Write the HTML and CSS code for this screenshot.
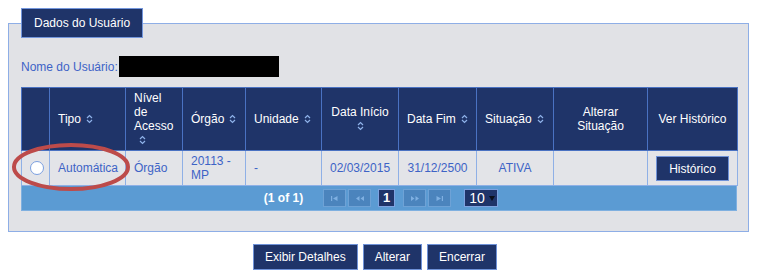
FILE: index.html
```html
<!DOCTYPE html>
<html lang="pt-BR">
<head>
<meta charset="utf-8">
<title>Dados do Usuário</title>
<link rel="stylesheet" href="styles.css">
</head>
<body>
<fieldset class="panel">
  <legend class="panel-title">Dados do Usuário</legend>
  <div class="user-row"><span class="user-label">Nome do Usuário:</span><span class="redacted"></span></div>
  <div class="datatable">
    <table class="grid">
      <colgroup>
        <col class="c-sel"><col class="c-tipo"><col class="c-nivel"><col class="c-orgao"><col class="c-unid"><col class="c-ini"><col class="c-fim"><col class="c-sit"><col class="c-alt"><col class="c-hist">
      </colgroup>
      <thead>
        <tr>
          <th></th>
          <th>Tipo<svg class="sort-icon" viewBox="0 0 7 10" width="7" height="10"><path d="M1 4L3.5 1.5L6 4M1 6L3.5 8.5L6 6"/></svg></th>
          <th>Nível de Acesso<svg class="sort-icon" viewBox="0 0 7 10" width="7" height="10"><path d="M1 4L3.5 1.5L6 4M1 6L3.5 8.5L6 6"/></svg></th>
          <th>Órgão<svg class="sort-icon" viewBox="0 0 7 10" width="7" height="10"><path d="M1 4L3.5 1.5L6 4M1 6L3.5 8.5L6 6"/></svg></th>
          <th>Unidade<svg class="sort-icon" viewBox="0 0 7 10" width="7" height="10"><path d="M1 4L3.5 1.5L6 4M1 6L3.5 8.5L6 6"/></svg></th>
          <th class="center">Data Início<br><svg class="sort-icon solo" viewBox="0 0 7 10" width="7" height="10"><path d="M1 4L3.5 1.5L6 4M1 6L3.5 8.5L6 6"/></svg></th>
          <th>Data Fim<svg class="sort-icon" viewBox="0 0 7 10" width="7" height="10"><path d="M1 4L3.5 1.5L6 4M1 6L3.5 8.5L6 6"/></svg></th>
          <th>Situação<svg class="sort-icon" viewBox="0 0 7 10" width="7" height="10"><path d="M1 4L3.5 1.5L6 4M1 6L3.5 8.5L6 6"/></svg></th>
          <th class="center">Alterar Situação</th>
          <th class="center">Ver Histórico</th>
        </tr>
      </thead>
      <tbody>
        <tr>
          <td class="center"><span class="radio"></span></td>
          <td>Automática</td>
          <td>Órgão</td>
          <td>20113 - MP</td>
          <td>-</td>
          <td class="center">02/03/2015</td>
          <td class="center">31/12/2500</td>
          <td class="center">ATIVA</td>
          <td></td>
          <td class="center"><button class="btn btn-small" type="button">Histórico</button></td>
        </tr>
      </tbody>
    </table>
    <div class="paginator">
      <span class="pg-count">(1 of 1)</span>
      <span class="pg-btn pg-first"><svg viewBox="0 0 7 5" width="7" height="5"><rect x="0" y="0" width="1.2" height="5"/><path d="M6.5 0L2 2.5L6.5 5Z"/></svg></span>
      <span class="pg-btn pg-prev"><svg viewBox="0 0 8 5" width="8" height="5"><path d="M3.5 0L0 2.5L3.5 5ZM8 0L4.5 2.5L8 5Z"/></svg></span>
      <span class="pg-current">1</span>
      <span class="pg-btn pg-next"><svg viewBox="0 0 8 5" width="8" height="5"><path d="M0 0L3.5 2.5L0 5ZM4.5 0L8 2.5L4.5 5Z"/></svg></span>
      <span class="pg-btn pg-last"><svg viewBox="0 0 7 5" width="7" height="5"><path d="M0.5 0L5 2.5L0.5 5Z"/><rect x="5.8" y="0" width="1.2" height="5"/></svg></span>
      <span class="pg-select">10<svg class="pg-caret" viewBox="0 0 6 5" width="6" height="5"><path d="M0 0L6 0L3 5Z"/></svg></span>
    </div>
  </div>
</fieldset>
<div class="actions">
  <button class="btn" type="button">Exibir Detalhes</button>
  <button class="btn" type="button">Alterar</button>
  <button class="btn" type="button">Encerrar</button>
</div>
<svg class="highlight" viewBox="0 0 120 50" width="120" height="50"><ellipse cx="60" cy="25" rx="57" ry="22"/></svg>
</body>
</html>
```

FILE: styles.css
```css
* {
  box-sizing: border-box;
}

body {
  margin: 8px;
  position: relative;
  background: #ffffff;
  font-family: "Liberation Sans", Arial, sans-serif;
  font-size: 12px;
  line-height: 14px;
  color: #3d63c6;
}

.panel {
  margin: 0;
  min-width: 0;
  padding: 0 11px 20px 12px;
  border: 1px solid #8eaee6;
  background: #e1e2e6;
}

.panel-title {
  margin: 0;
  padding: 7px 12px;
  border: 1px solid #7396dc;
  background: #1f3469;
  color: #ffffff;
  line-height: 14px;
}

.user-row {
  display: flex;
  align-items: center;
  margin-top: 18px;
  height: 21px;
}

.user-label {
  color: #3d63c6;
}

.redacted {
  display: block;
  width: 160px;
  height: 21px;
  margin-left: 1px;
  background: #000000;
}

.datatable {
  margin-top: 10px;
}

.grid {
  width: 716px;
  border-collapse: collapse;
  table-layout: fixed;
}

.c-sel { width: 28px; }
.c-tipo { width: 76px; }
.c-nivel { width: 57px; }
.c-orgao { width: 63px; }
.c-unid { width: 76px; }
.c-ini { width: 77px; }
.c-fim { width: 78px; }
.c-sit { width: 77px; }
.c-alt { width: 94px; }
.c-hist { width: 90px; }

.grid th {
  height: 62px;
  padding: 3px 8px;
  border: 1px solid #4a72c2;
  background: #1f3469;
  color: #ffffff;
  font-weight: normal;
  text-align: left;
  vertical-align: middle;
}

.grid td {
  height: 34px;
  padding: 3px 8px;
  border: 1px solid #8fb0e6;
  background: #e3e4e8;
  color: #3d63c6;
  text-align: left;
  vertical-align: middle;
}

.grid .center {
  text-align: center;
}

.sort-icon {
  display: inline-block;
  margin-left: 5px;
  vertical-align: -1px;
  fill: none;
  stroke: #8fb2ea;
  stroke-width: 1.2;
}

.sort-icon.solo {
  margin-left: 0;
}

.radio {
  display: block;
  width: 14px;
  height: 14px;
  margin: 0 auto;
  border: 1px solid #7b9fe0;
  border-radius: 50%;
  background: #ffffff;
}

.btn {
  padding: 5px 11px;
  border: 1px solid #6f92d8;
  background: #1f3469;
  color: #ffffff;
  font-family: inherit;
  font-size: 12px;
  line-height: 14px;
}

.btn-small {
  padding: 5px 12px 4px;
}

.paginator {
  display: flex;
  align-items: center;
  justify-content: center;
  width: 716px;
  height: 25px;
  padding-left: 4px;
  border: 1px solid #7fb0e0;
  border-top: 0;
  background: #5b9bd3;
}

.pg-count {
  margin-right: 20px;
  color: #ffffff;
  font-weight: bold;
}

.pg-btn {
  display: flex;
  align-items: center;
  justify-content: center;
  width: 23px;
  height: 18px;
  border: 1px solid #6ea2d6;
  background: #4b84bd;
  fill: #7fb0e2;
}

.pg-first { margin-right: 2px; }
.pg-prev { margin-right: 7px; }
.pg-next { margin-left: 8px; margin-right: 2px; }
.pg-last { margin-right: 13px; }

.pg-current {
  display: flex;
  align-items: center;
  justify-content: center;
  width: 17px;
  height: 18px;
  border: 1px solid #7ea2e0;
  background: #1f3469;
  color: #ffffff;
  font-weight: bold;
  font-size: 13px;
}

.pg-select {
  display: flex;
  align-items: center;
  width: 34px;
  height: 18px;
  padding-left: 4px;
  border: 1px solid #7ea2e0;
  background: #1f3469;
  color: #ffffff;
  font-size: 14px;
}

.pg-caret {
  margin-left: 4px;
  fill: #0b0f1a;
}

.actions {
  display: flex;
  justify-content: center;
  gap: 5px;
  margin-top: 12px;
  padding-right: 7px;
}

.highlight {
  position: absolute;
  left: 3px;
  top: 134px;
  fill: none;
  stroke: #bd4b4a;
  stroke-width: 4;
}
```
